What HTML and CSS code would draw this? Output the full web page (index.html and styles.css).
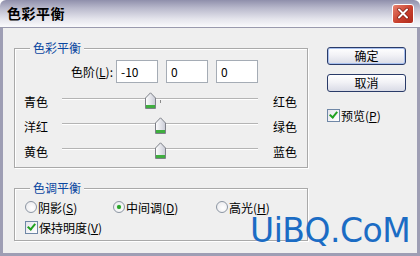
FILE: index.html
```html
<!DOCTYPE html>
<html lang="zh">
<head>
    <meta charset="UTF-8">
    <title>色彩平衡</title>
    <link rel="stylesheet" href="styles.css">
</head>
<body>

    <div class="dialog">
        <div class="titlebar">
            <span class="title">色彩平衡</span>
            <span class="close">
                <svg width="20" height="18" viewBox="0 0 20 18">
                    <path d="M6 4.5 L14 12.5 M14 4.5 L6 12.5" stroke="#7a1a10" stroke-width="3.4" stroke-linecap="round"/>
                    <path d="M6 4.5 L14 12.5 M14 4.5 L6 12.5" stroke="#fff" stroke-width="2" stroke-linecap="round"/>
                </svg>
            </span>
        </div>

        <div class="content">
            <div class="main">
                <div class="group balance">
                    <div class="group-title">色彩平衡</div>

                    <div class="levels">
                        <label class="levels-label">色阶(<u>L</u>):</label>
                        <input class="field" type="text" value="-10">
                        <input class="field" type="text" value="0">
                        <input class="field" type="text" value="0">
                    </div>

                    <div class="slider-row">
                        <span class="side">青色</span>
                        <div class="track">
                            <span class="tick"></span>
                            <svg class="thumb" style="left: 45%" width="11" height="17" viewBox="0 0 11 17"><use href="#thumb"/></svg>
                        </div>
                        <span class="side">红色</span>
                    </div>
                    <div class="slider-row">
                        <span class="side">洋红</span>
                        <div class="track">
                            <span class="tick"></span>
                            <svg class="thumb" style="left: 50%" width="11" height="17" viewBox="0 0 11 17"><use href="#thumb"/></svg>
                        </div>
                        <span class="side">绿色</span>
                    </div>
                    <div class="slider-row">
                        <span class="side">黄色</span>
                        <div class="track">
                            <span class="tick"></span>
                            <svg class="thumb" style="left: 50%" width="11" height="17" viewBox="0 0 11 17"><use href="#thumb"/></svg>
                        </div>
                        <span class="side">蓝色</span>
                    </div>
                </div>

                <div class="group tone">
                    <div class="group-title">色调平衡</div>
                    <div class="radios">
                        <span class="option shadows"><span class="radio"></span>阴影(<u>S</u>)</span>
                        <span class="option midtones"><span class="radio on"></span>中间调(<u>D</u>)</span>
                        <span class="option"><span class="radio"></span>高光(<u>H</u>)</span>
                    </div>
                    <div class="option keep"><span class="check on"></span>保持明度(<u>V</u>)</div>
                </div>
            </div>

            <div class="actions">
                <button class="btn default">确定</button>
                <button class="btn">取消</button>
                <div class="option preview"><span class="check on"></span>预览(<u>P</u>)</div>
            </div>

            <div class="watermark">UiBQ.CoM</div>
        </div>
    </div>

    <svg width="0" height="0" class="defs">
        <defs>
            <linearGradient id="thumbFill" x1="0" y1="0" x2="1" y2="0">
                <stop offset="0" stop-color="#ffffff"/>
                <stop offset="1" stop-color="#c9cbd6"/>
            </linearGradient>
            <symbol id="thumb" viewBox="0 0 11 17">
                <path d="M0.5 6 L5.5 0.8 L10.5 6 V16.5 H0.5 Z" fill="url(#thumbFill)" stroke="#7d8088"/>
                <rect x="1" y="13" width="9" height="3" fill="#3fae3f"/>
            </symbol>
        </defs>
    </svg>

</body>
</html>
```

FILE: styles.css
```css
body { margin: 0; font-family: "Noto Sans CJK SC", "Liberation Sans", sans-serif; font-size: 12px; color: #000; }
u { text-decoration: underline; text-underline-offset: 1px; }

.dialog { width: 420px; height: 256px; }
.titlebar { height: 28px; box-sizing: border-box; display: flex; align-items: center; justify-content: space-between; padding: 0 6px 1px 7px; border-radius: 6px 6px 0 0; background: linear-gradient(#8f8fab, #b9b9cc 30%, #e4e4ec 70%, #fafafc); border-bottom: 1px solid #9a9aae; }
.title { font-size: 14px; font-weight: bold; letter-spacing: 0.5px; }
.close { width: 20px; height: 18px; border-radius: 3px; border: 1px solid #fff; background: linear-gradient(135deg, #e8826e, #c8402e 55%, #b02a1c); display: flex; margin-top: 2px; }

.content { position: relative; height: 228px; box-sizing: border-box; display: flex; padding: 19px 0 0 11px; background: #efefef; border: 3px solid #9e9eb4; border-top: none; }

.group { box-sizing: border-box; width: 294px; border: 1px solid #a9a9a9; box-shadow: inset 1px 1px 0 #fff, 1px 1px 0 #fff; }
.group-title { width: fit-content; margin: -8px 0 0 15px; padding: 0 3px; line-height: 14px; color: #0a46a0; background: #efefef; }
.balance { margin-top: 1px; height: 120px; }
.tone { margin-top: 20px; height: 53px; }

.levels { display: flex; align-items: center; margin-top: 5px; }
.levels-label { width: 98px; margin-right: 3px; text-align: right; }
.field { box-sizing: border-box; width: 42px; height: 23px; margin: 0 8px 0 0; padding: 0 4px; border: 1px solid #a5acb5; background: #fff; font: inherit; }

.slider-row { display: grid; grid-template-columns: 38px 196px 1fr; align-items: center; height: 25px; padding-left: 9px; }
.levels + .slider-row { margin-top: 6px; }
.slider-row .side:last-child { padding-left: 15px; }
.track { position: relative; height: 25px; }
.track::before { content: ""; position: absolute; left: 0; right: 0; top: 9px; height: 1px; background: #b4b4b4; border-bottom: 1px solid #fff; }
.tick { position: absolute; left: 50%; top: 11px; width: 1px; height: 3px; background: #8a8a8a; }
.thumb { position: absolute; top: 3px; margin-left: -5px; }

.radios { display: flex; margin-top: 4px; padding-left: 10px; height: 16px; align-items: center; line-height: 15px; }
.option { display: flex; align-items: center; line-height: 15px; }
.shadows { width: 88px; }
.midtones { width: 103px; }
.keep { margin: 4px 0 0 10px; height: 16px; }

.radio { box-sizing: border-box; width: 12px; height: 12px; margin-right: 1px; border-radius: 50%; border: 1px solid #8c96a3; background: radial-gradient(circle at 60% 60%, #fff, #e6e6ea); display: flex; align-items: center; justify-content: center; }
.radio.on::after { content: ""; width: 4px; height: 4px; border-radius: 50%; background: #2aa32a; box-shadow: 0 0 1px #5ccf5c; }
.check { box-sizing: border-box; width: 13px; height: 13px; margin-right: 1px; border: 1px solid #6f87a6; background: linear-gradient(135deg, #e4e4ec, #fff); position: relative; }
.check.on::after { content: ""; position: absolute; left: 3px; top: 0px; width: 3px; height: 6px; border: solid #21a121; border-width: 0 2px 2px 0; transform: rotate(40deg); }

.actions { display: flex; flex-direction: column; align-items: flex-start; margin-left: 19px; }
.btn { box-sizing: border-box; width: 79px; height: 18px; padding: 0; margin-bottom: 9px; border: 1px solid #2a3b68; border-radius: 3px; background: linear-gradient(#ffffff, #f2f2f6 45%, #d9dbe6); font: inherit; line-height: 14px; }
.btn.default { box-shadow: inset 0 0 0 1px #a8c0ee; }
.preview { margin-top: 7px; }

.watermark { position: absolute; left: 247px; top: 191px; font-family: "DejaVu Sans", sans-serif; font-size: 33px; line-height: 24px; color: #1b6cc4; letter-spacing: -0.5px; }
.defs { position: absolute; }
```
